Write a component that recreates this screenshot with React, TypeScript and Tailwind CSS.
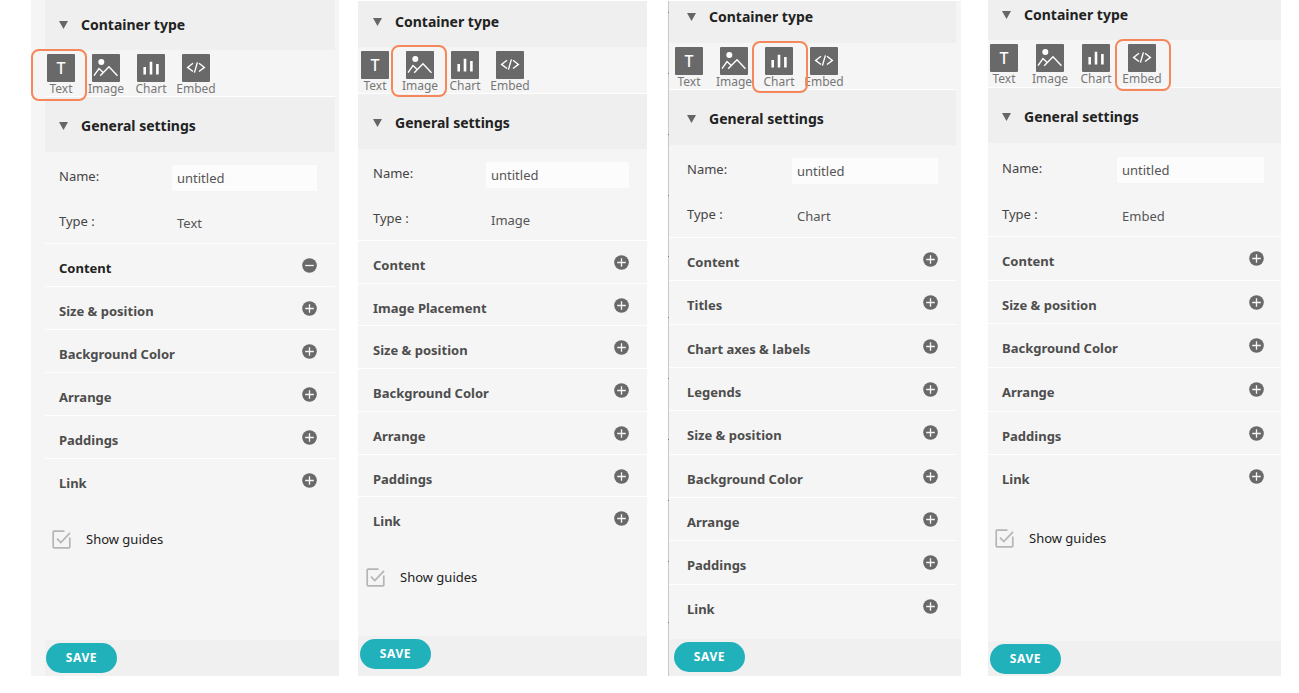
import { useState } from "react";
import clsx from "clsx";

type Kind = "Text" | "Image" | "Chart" | "Embed";

interface PanelStyle {
  panel: string;
  body: string;
  header: string;
  types: string;
  pad: string;
  settings: string;
  label: string;
  list: string;
  guides: string;
  footer: string;
  ring: string;
}

interface PanelData {
  kind: Kind;
  sections: string[];
  open?: string;
  guides: boolean;
  rail?: boolean;
  style: PanelStyle;
}

const KINDS: Kind[] = ["Text", "Image", "Chart", "Embed"];

const PANELS: PanelData[] = [
  {
    kind: "Text",
    sections: ["Content", "Size & position", "Background Color", "Arrange", "Paddings", "Link"],
    open: "Content",
    guides: true,
    style: {
      panel: "flex-[308_1_0%]",
      body: "ml-[14px] mr-1",
      header: "h-[50px] pb-[15px]",
      types: "h-[47px] gap-[17px] pl-[2px]",
      pad: "pl-[14px] pr-[18px]",
      settings: "gap-[19px] pt-[13px] pb-[7px]",
      label: "w-[113px]",
      list: "h-[258px]",
      guides: "mt-7 pl-[7px]",
      footer: "ml-[14px] h-9 pl-px",
      ring: "-top-[5px] -left-4",
    },
  },
  {
    kind: "Image",
    sections: ["Content", "Image Placement", "Size & position", "Background Color", "Arrange", "Paddings", "Link"],
    guides: true,
    style: {
      panel: "ml-[19px] mt-px flex-[289_1_0%]",
      body: "",
      header: "h-[46px] pb-[15px]",
      types: "h-[47px] gap-[17px] pl-[3px]",
      pad: "pl-[15px] pr-[18px]",
      settings: "gap-[19px] pt-[13px] pb-[7px]",
      label: "w-[113px]",
      list: "h-[299px]",
      guides: "mt-7 pl-2",
      footer: "h-10 pl-[2px]",
      ring: "-top-[6px] -left-[15px]",
    },
  },
  {
    kind: "Chart",
    sections: [
      "Content",
      "Titles",
      "Chart axes & labels",
      "Legends",
      "Size & position",
      "Background Color",
      "Arrange",
      "Paddings",
      "Link",
    ],
    guides: false,
    rail: true,
    style: {
      panel: "ml-[21px] mt-px flex-[293_1_0%]",
      body: "mr-[5px]",
      header: "h-[42px] pb-4",
      types: "h-[47px] gap-[17px] pl-[6px]",
      pad: "pl-[18px] pr-[18px]",
      settings: "gap-[19px] pt-[13px] pb-2",
      label: "w-[105px]",
      list: "h-[390px]",
      guides: "",
      footer: "h-[37px] pl-[5px]",
      ring: "-top-[6px] -left-[13px]",
    },
  },
  {
    kind: "Embed",
    sections: ["Content", "Size & position", "Background Color", "Arrange", "Paddings", "Link"],
    guides: true,
    style: {
      panel: "ml-[27px] flex-[293_1_0%]",
      body: "",
      header: "h-10 pb-[15px]",
      types: "h-12 gap-[18px] pl-[2px]",
      pad: "pl-[14px] pr-[17px]",
      settings: "gap-5 pt-[14px] pb-[7px]",
      label: "w-[115px]",
      list: "h-[262px]",
      guides: "mt-[30px] pl-[7px]",
      footer: "h-[35px] pl-[2px]",
      ring: "-top-[5px] -left-[13px]",
    },
  },
];

function KindIcon({ kind }: { kind: Kind }) {
  if (kind === "Text") {
    return <span className="text-base leading-none font-medium text-white">T</span>;
  }
  return (
    <svg viewBox="0 0 28 28" className="size-7" fill="none" stroke="white" aria-hidden="true">
      {kind === "Image" && (
        <>
          <circle cx="9.3" cy="8" r="3" fill="white" stroke="none" />
          <path d="M2 21.7 L7 14.6 L11.2 18.4 M8.2 21.7 L17 12.8 L25.5 21.7" strokeWidth="1.4" />
        </>
      )}
      {kind === "Chart" && <path d="M7.7 13 V20.5 M14 7.8 V20.5 M20.4 10 V20.5" strokeWidth="2.6" />}
      {kind === "Embed" && (
        <path d="M11 9.3 L5.6 13.4 L11 17.5 M17 9.3 L22.4 13.4 L17 17.5 M15.4 8.4 L12.4 18.6" strokeWidth="1.4" />
      )}
    </svg>
  );
}

function SectionHeader({ title, className }: { title: string; className: string }) {
  return (
    <h2 className={clsx("flex items-end gap-[13px] bg-[#efefef]", className)}>
      <svg viewBox="0 0 9 8" className="mb-[6px] h-2 w-[9px] shrink-0" fill="#666666" aria-hidden="true">
        <path d="M0 0 H9 L4.5 8 Z" />
      </svg>
      <span className="text-sm leading-5 font-bold whitespace-nowrap text-[#222222]">{title}</span>
    </h2>
  );
}

function ToggleIcon({ open }: { open: boolean }) {
  return (
    <svg viewBox="0 0 15 15" className="size-[15px] shrink-0" aria-hidden="true">
      <circle cx="7.5" cy="7.5" r="7.3" fill="#696969" />
      <path d={open ? "M3.2 7.5 H11.8" : "M3.2 7.5 H11.8 M7.5 3.2 V11.8"} stroke="#f5f5f5" strokeWidth="1.3" />
    </svg>
  );
}

function GuidesToggle({ id, className }: { id: string; className: string }) {
  const [on, setOn] = useState(true);
  return (
    <div className={clsx("flex items-center gap-[15px]", className)}>
      <span className="relative size-[19px]">
        <input
          id={id}
          type="checkbox"
          checked={on}
          onChange={(e) => setOn(e.target.checked)}
          className="absolute inset-0 size-full cursor-pointer appearance-none"
        />
        <svg viewBox="0 0 19 19" className="pointer-events-none size-full" fill="none" stroke="#b5b5b5" strokeWidth="1.7" aria-hidden="true">
          <path d="M12.5 1.2 H2.2 Q1.2 1.2 1.2 2.2 V16.8 Q1.2 17.8 2.2 17.8 H16.8 Q17.8 17.8 17.8 16.8 V7.5" />
          {on && <path d="M5 8.7 L8.8 12.5 L18 2.8" />}
        </svg>
      </span>
      <label htmlFor={id} className="text-[13px] leading-5 text-[#222222]">
        Show guides
      </label>
    </div>
  );
}

function Panel({ data }: { data: PanelData }) {
  const { kind, sections, style } = data;
  const [name, setName] = useState("untitled");
  const [open, setOpen] = useState(data.open ?? "");
  const nameId = `name-${kind}`;

  return (
    <section className={clsx("flex min-w-0", style.panel, "bg-[#f5f5f5]")}>
      {data.rail && (
        <div className="w-px shrink-0 bg-[repeating-linear-gradient(to_bottom,#c8c8c8_0px,#c8c8c8_11px,#777777_11px,#777777_12px,#c8c8c8_12px,#c8c8c8_61px)]" />
      )}
      <div className="flex min-w-0 flex-1 flex-col">
        <div className={style.body}>
          <SectionHeader title="Container type" className={clsx(style.header, style.pad)} />
          <div className={clsx("flex border-b border-white pt-1", style.types)}>
            {KINDS.map((k) => (
              <button
                key={k}
                type="button"
                aria-pressed={k === kind}
                className="relative flex w-7 shrink-0 flex-col items-center"
              >
                <span className="flex size-7 shrink-0 items-center justify-center rounded-[1px] bg-[#696969]">
                  <KindIcon kind={k} />
                </span>
                <span className="text-xs leading-[14px] text-[#777777]">{k}</span>
                {k === kind && (
                  <span
                    className={clsx(
                      "absolute z-10 h-[52px] w-14 rounded-lg border-2 border-[#f5875a]",
                      style.ring,
                    )}
                  />
                )}
              </button>
            ))}
          </div>
          <SectionHeader title="General settings" className={clsx("h-[55px] pb-4", style.pad)} />
          <div className={clsx("flex flex-col text-[13px]", style.settings, style.pad)}>
            <div className="flex items-start">
              <label htmlFor={nameId} className={clsx("shrink-0 leading-[22px] text-[#444444]", style.label)}>
                Name:
              </label>
              <input
                id={nameId}
                value={name}
                onChange={(e) => setName(e.target.value)}
                className="h-[26px] min-w-0 flex-1 bg-[#fcfcfc] px-[5px] text-[#555555] outline-none"
              />
            </div>
            <div className="flex items-start">
              <span className={clsx("shrink-0 leading-[22px] text-[#444444]", style.label)}>Type :</span>
              <span className="px-[5px] leading-[26px] text-[#555555]">{kind}</span>
            </div>
          </div>
          <div className={clsx("grid auto-rows-fr", style.list)}>
            {sections.map((s) => (
              <button
                key={s}
                type="button"
                aria-expanded={s === open}
                onClick={() => setOpen(s === open ? "" : s)}
                className={clsx("flex items-start justify-between border-t border-white pt-[14px]", style.pad)}
              >
                <span
                  className={clsx(
                    "text-[13px] leading-5 font-bold whitespace-nowrap",
                    s === open ? "text-[#222222]" : "text-[#4d4d4d]",
                  )}
                >
                  {s}
                </span>
                <ToggleIcon open={s === open} />
              </button>
            ))}
          </div>
          {data.guides && <GuidesToggle id={`guides-${kind}`} className={style.guides} />}
        </div>
        <footer className={clsx("mt-auto flex items-start bg-[#f0f0f0] pt-[3px]", style.footer)}>
          <button
            type="button"
            className="h-[30px] w-[71px] rounded-full bg-[#21b1bb] text-xs font-bold tracking-wider text-white"
          >
            SAVE
          </button>
        </footer>
      </div>
    </section>
  );
}

export default function App() {
  return (
    <main className="flex min-h-[676px] bg-white pr-[18px] pl-[31px] font-['Noto_Sans','Open_Sans',sans-serif]">
      {PANELS.map((p) => (
        <Panel key={p.kind} data={p} />
      ))}
    </main>
  );
}
